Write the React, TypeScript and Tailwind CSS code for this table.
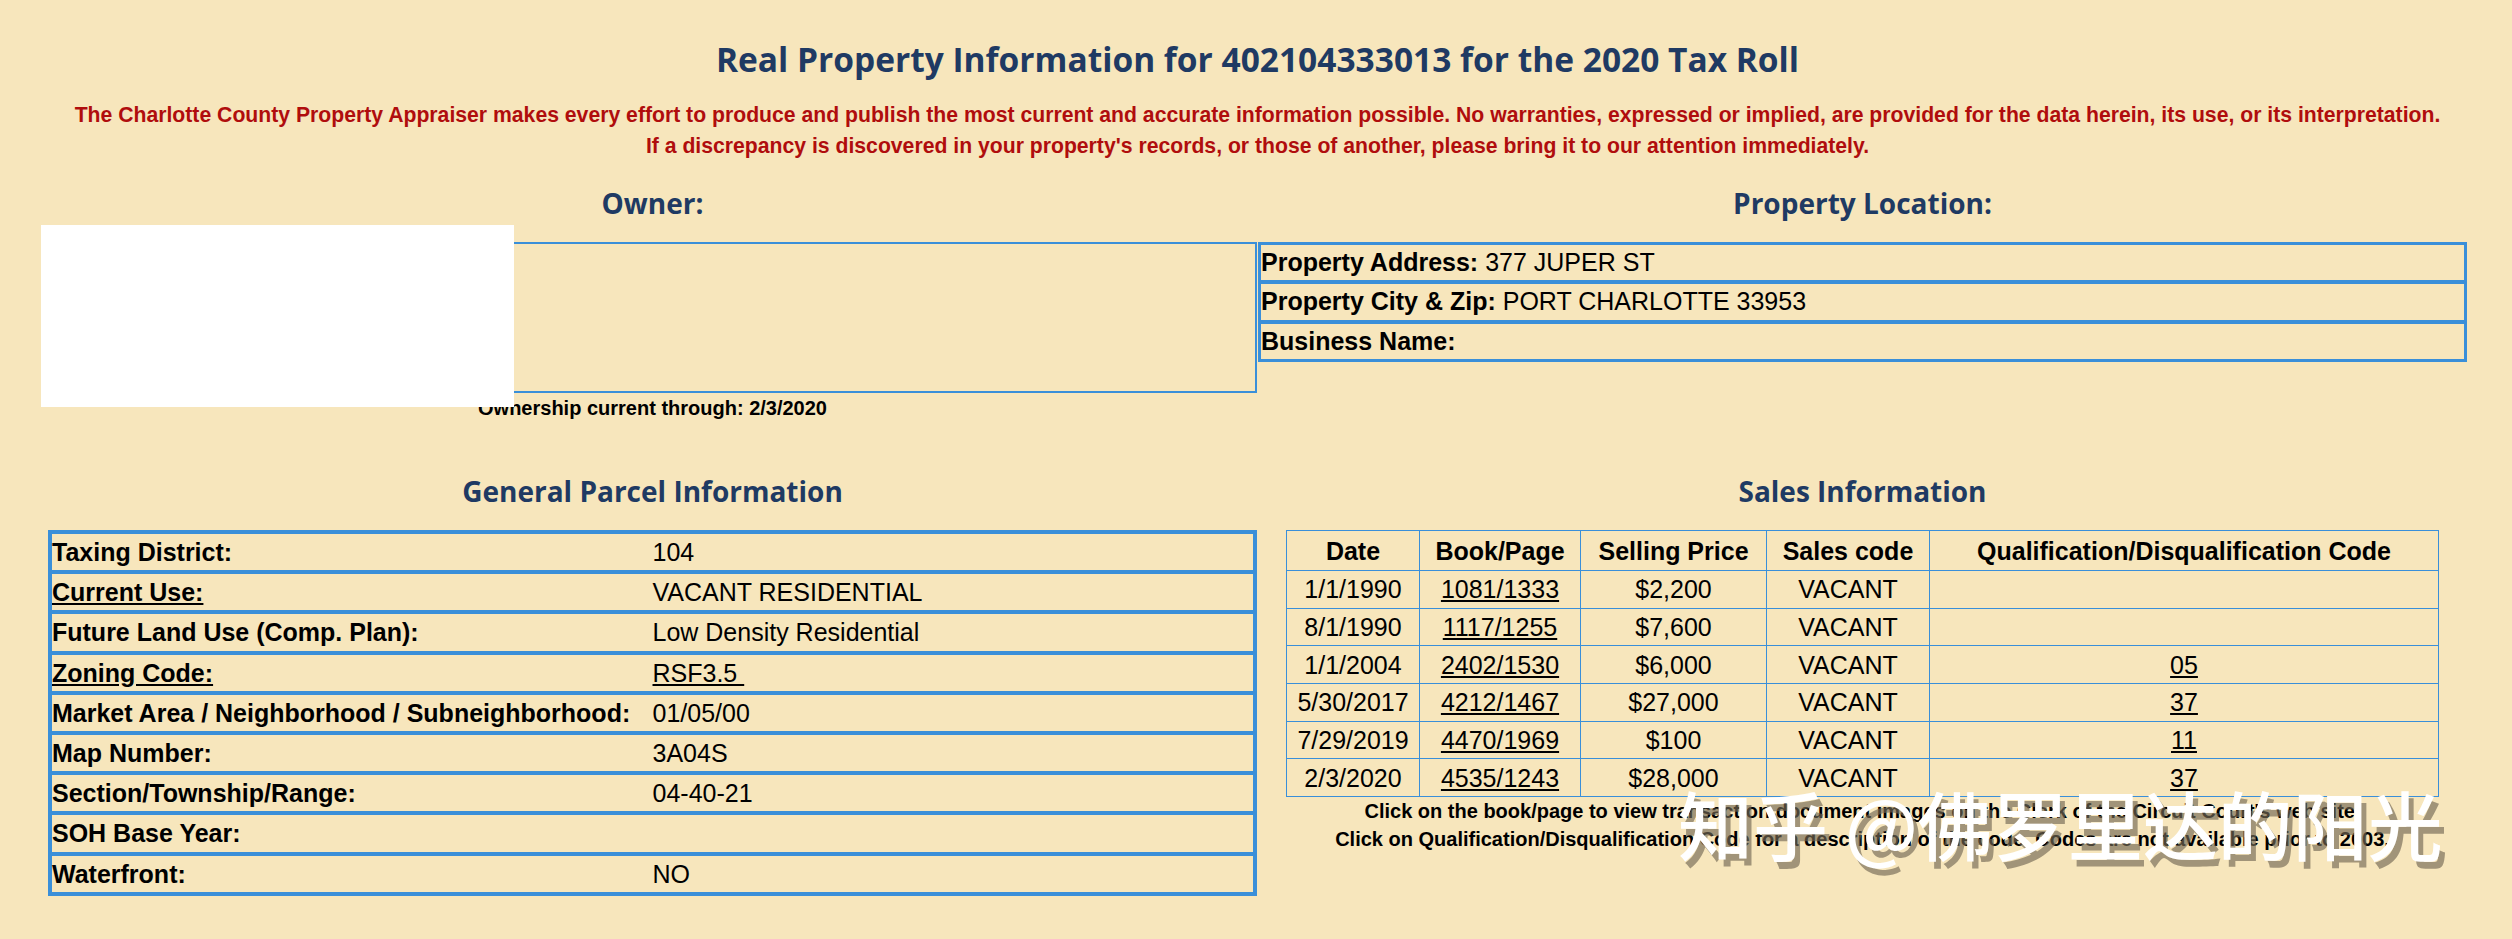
const parcelRows = [
  { label: "Taxing District:", value: "104" },
  { label: "Current Use:", value: "VACANT RESIDENTIAL", labelLink: true },
  { label: "Future Land Use (Comp. Plan):", value: "Low Density Residential" },
  { label: "Zoning Code:", value: "RSF3.5 ", labelLink: true, valueLink: true },
  { label: "Market Area / Neighborhood / Subneighborhood:", value: "01/05/00" },
  { label: "Map Number:", value: "3A04S" },
  { label: "Section/Township/Range:", value: "04-40-21" },
  { label: "SOH Base Year:", value: "" },
  { label: "Waterfront:", value: "NO" },
];

const sales = [
  { date: "1/1/1990", book: "1081/1333", price: "$2,200", code: "VACANT", qual: "" },
  { date: "8/1/1990", book: "1117/1255", price: "$7,600", code: "VACANT", qual: "" },
  { date: "1/1/2004", book: "2402/1530", price: "$6,000", code: "VACANT", qual: "05" },
  { date: "5/30/2017", book: "4212/1467", price: "$27,000", code: "VACANT", qual: "37" },
  { date: "7/29/2019", book: "4470/1969", price: "$100", code: "VACANT", qual: "11" },
  { date: "2/3/2020", book: "4535/1243", price: "$28,000", code: "VACANT", qual: "37" },
];

const location = [
  { label: "Property Address:", value: "377 JUPER ST" },
  { label: "Property City & Zip:", value: "PORT CHARLOTTE 33953" },
  { label: "Business Name:", value: "" },
];

const Heading = ({ children }: { children: React.ReactNode }) => (
  <h2 className="text-center font-['Open_Sans',sans-serif] text-[28px] font-bold leading-[36px] text-[#1f3a63]">
    {children}
  </h2>
);

export default function App() {
  return (
    <div className="relative min-h-[939px] w-full bg-[#f7e6bc] pt-[39px] pr-[45px] pl-[48px] font-['Liberation_Sans',Arial,sans-serif] text-black">
      <h1 className="text-center font-['Open_Sans',sans-serif] text-[33.5px] font-bold leading-[40px] text-[#1f3a63]">
        Real Property Information for 402104333013 for the 2020 Tax Roll
      </h1>
      <div className="mt-[20px] text-center text-[21.2px] font-bold leading-[31px] text-[#b00d0d]">
        <p>
          The Charlotte County Property Appraiser makes every effort to produce and publish the most current and
          accurate information possible. No warranties, expressed or implied, are provided for the data herein, its
          use, or its interpretation.
        </p>
        <p>
          If a discrepancy is discovered in your property's records, or those of another, please bring it to our
          attention immediately.
        </p>
      </div>

      <div className="mt-[24px] grid grid-cols-2 items-start gap-px">
        <div>
          <Heading>Owner:</Heading>
          <div className="mt-[21px] h-[151px] border-2 border-[#3a8fd9]" />
          <p className="mt-[3px] text-center text-[20px] font-bold leading-[24px]">
            Ownership current through: 2/3/2020
          </p>
        </div>
        <div>
          <Heading>Property Location:</Heading>
          <div className="mt-[21px] border border-[#3a8fd9]">
            {location.map((row) => (
              <div key={row.label} className="h-[39.3px] border-2 border-[#3a8fd9] text-[25px] leading-[35px]">
                <span className="font-bold">{row.label}</span> {row.value}
              </div>
            ))}
          </div>
        </div>
      </div>

      <div className="mt-[53px] grid grid-cols-2 items-start gap-px">
        <div>
          <Heading>General Parcel Information</Heading>
          <div className="mt-[21px] border-2 border-[#3a8fd9]">
            {parcelRows.map((row) => (
              <div
                key={row.label}
                className="grid h-[40.2px] grid-cols-2 border-2 border-[#3a8fd9] text-[25px] leading-[36px]"
              >
                <span className={row.labelLink ? "font-bold underline" : "font-bold"}>{row.label}</span>
                <span className={row.valueLink ? "whitespace-pre underline" : ""}>{row.value}</span>
              </div>
            ))}
          </div>
        </div>
        <div>
          <Heading>Sales Information</Heading>
          <table className="mx-auto mt-[21px] w-[1153px] table-fixed border-collapse border border-[#3a8fd9] text-center text-[25px] leading-[28px]">
            <colgroup>
              <col className="w-[133px]" />
              <col className="w-[161px]" />
              <col className="w-[186px]" />
              <col className="w-[163px]" />
              <col />
            </colgroup>
            <thead>
              <tr className="h-[40px] font-bold">
                <th className="border border-[#3a8fd9]">Date</th>
                <th className="border border-[#3a8fd9]">Book/Page</th>
                <th className="border border-[#3a8fd9]">Selling Price</th>
                <th className="border border-[#3a8fd9]">Sales code</th>
                <th className="border border-[#3a8fd9]">Qualification/Disqualification Code</th>
              </tr>
            </thead>
            <tbody>
              {sales.map((s) => (
                <tr key={s.book} className="h-[37.7px]">
                  <td className="border border-[#3a8fd9]">{s.date}</td>
                  <td className="border border-[#3a8fd9] underline">{s.book}</td>
                  <td className="border border-[#3a8fd9]">{s.price}</td>
                  <td className="border border-[#3a8fd9]">{s.code}</td>
                  <td className="border border-[#3a8fd9] underline">{s.qual}</td>
                </tr>
              ))}
            </tbody>
          </table>
          <div className="text-center text-[20px] font-bold leading-[28px]">
            <p>Click on the book/page to view transaction document images on the Clerk of the Circuit Court's web site.</p>
            <p>
              Click on Qualification/Disqualification Code for a description of the code. Codes are not available prior
              to 2003.
            </p>
          </div>
        </div>
      </div>

      {/* redaction block over the owner name */}
      <div className="absolute top-[225px] left-[41px] h-[182px] w-[473px] bg-white" />

      {/* site watermark */}
      <div className="pointer-events-none absolute top-[778px] left-[1678px] font-['Noto_Sans_CJK_SC',sans-serif] text-[75px] font-medium leading-[90px] whitespace-nowrap text-white [text-shadow:5px_7px_0_rgba(115,105,85,0.65)]">
        知乎 @佛罗里达的阳光
      </div>
    </div>
  );
}
